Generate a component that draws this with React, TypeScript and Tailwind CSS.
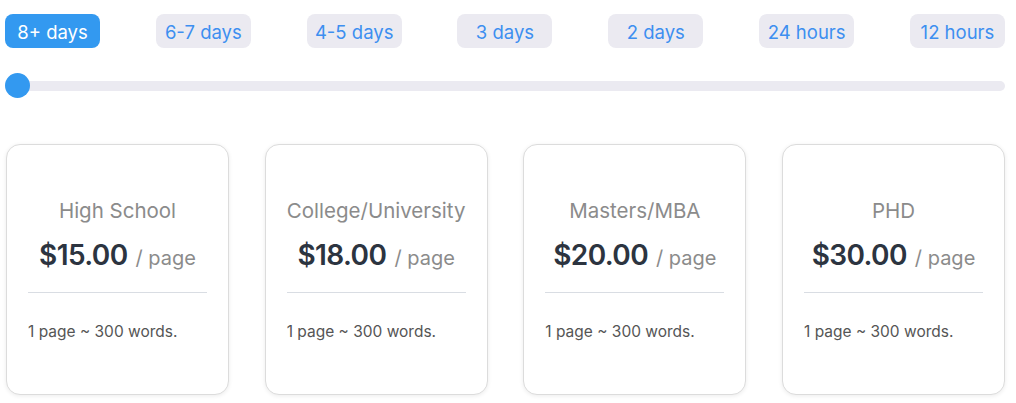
import { useState } from "react";

const durations = ["8+ days", "6-7 days", "4-5 days", "3 days", "2 days", "24 hours", "12 hours"];

const levels = [
  { name: "High School", price: "$15.00" },
  { name: "College/University", price: "$18.00" },
  { name: "Masters/MBA", price: "$20.00" },
  { name: "PHD", price: "$30.00" },
];

function PriceCard({ name, price }: { name: string; price: string }) {
  return (
    <div className="w-[223px] h-[251px] rounded-[14px] border border-[#dcdcdc] bg-white shadow-[0_1px_4px_rgba(0,0,0,0.08)] px-[21px] pt-[52px]">
      <div className="text-center text-[20.5px] leading-[28px] text-[#8b8b8b] whitespace-nowrap">{name}</div>
      <div className="mt-[12px] flex items-baseline justify-center gap-[8px]">
        <span className="text-[28px] leading-[36px] font-semibold text-[#2c3440] tracking-[-0.6px]">{price}</span>
        <span className="text-[20px] text-[#8b8b8b]">/ page</span>
      </div>
      <div className="mt-[19px] h-px bg-[#d9dde3]" />
      <div className="mt-[29px] text-[15.5px] leading-[20px] text-[#555]">1 page ~ 300 words.</div>
    </div>
  );
}

export default function App() {
  const [active, setActive] = useState(0);
  return (
    <div className="w-[1016px] h-[403px] bg-white overflow-hidden px-[5px] pt-[14px]" style={{ fontFamily: "Inter, 'Noto Sans', sans-serif" }}>
      <div className="w-[1000px] flex justify-between">
        {durations.map((d, i) => (
          <button
            key={d}
            onClick={() => setActive(i)}
            className={
              i === active
                ? "w-[95px] h-[34px] pt-[1px] rounded-[8px] bg-[#3399f0] text-white text-[18.5px] leading-[28px] whitespace-nowrap"
                : "w-[95px] h-[34px] pt-[1px] rounded-[8px] bg-[#ebeaf1] text-[#3d8ff0] text-[18.5px] leading-[28px] whitespace-nowrap"
            }
          >
            {d}
          </button>
        ))}
      </div>
      <div className="relative mt-[33px] w-[1000px] h-[10px] rounded-full bg-[#ebeaf1]">
        <div className="absolute left-0 top-[-8px] w-[25px] h-[25px] rounded-full bg-[#3399f0]" />
      </div>
      <div className="mt-[53px] w-[1000px] flex justify-between pl-[1px]">
        {levels.map((l) => (
          <PriceCard key={l.name} {...l} />
        ))}
      </div>
    </div>
  );
}
